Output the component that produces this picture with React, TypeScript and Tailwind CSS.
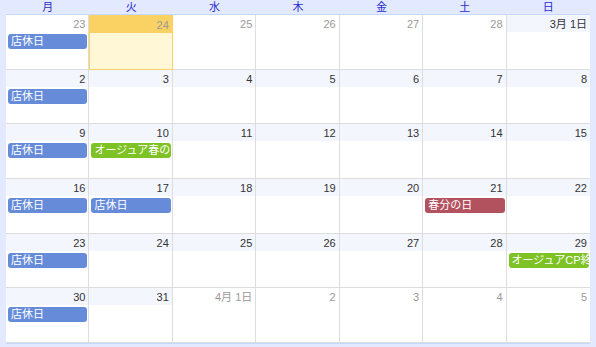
import React from 'react';

type Ev = { title: string; color: string };
type Day = { label: string; current: boolean; today?: boolean; events?: Ev[] };

const BLUE = 'bg-[#668cd9]';
const GREEN = 'bg-[#7ec225]';
const RED = 'bg-[#b3525f]';

const closed: Ev = { title: '店休日', color: BLUE };

const weeks: Day[][] = [
  [
    { label: '23', current: false, events: [closed] },
    { label: '24', current: false, today: true },
    { label: '25', current: false },
    { label: '26', current: false },
    { label: '27', current: false },
    { label: '28', current: false },
    { label: '3月 1日', current: true },
  ],
  [
    { label: '2', current: true, events: [closed] },
    { label: '3', current: true },
    { label: '4', current: true },
    { label: '5', current: true },
    { label: '6', current: true },
    { label: '7', current: true },
    { label: '8', current: true },
  ],
  [
    { label: '9', current: true, events: [closed] },
    { label: '10', current: true, events: [{ title: 'オージュア春のキャンペーン', color: GREEN }] },
    { label: '11', current: true },
    { label: '12', current: true },
    { label: '13', current: true },
    { label: '14', current: true },
    { label: '15', current: true },
  ],
  [
    { label: '16', current: true, events: [closed] },
    { label: '17', current: true, events: [closed] },
    { label: '18', current: true },
    { label: '19', current: true },
    { label: '20', current: true },
    { label: '21', current: true, events: [{ title: '春分の日', color: RED }] },
    { label: '22', current: true },
  ],
  [
    { label: '23', current: true, events: [closed] },
    { label: '24', current: true },
    { label: '25', current: true },
    { label: '26', current: true },
    { label: '27', current: true },
    { label: '28', current: true },
    { label: '29', current: true, events: [{ title: 'オージュアCP終了', color: GREEN }] },
  ],
  [
    { label: '30', current: true, events: [closed] },
    { label: '31', current: true },
    { label: '4月 1日', current: false },
    { label: '2', current: false },
    { label: '3', current: false },
    { label: '4', current: false },
    { label: '5', current: false },
  ],
];

const dayNames = ['月', '火', '水', '木', '金', '土', '日'];

const Cell: React.FC<{ day: Day; last: boolean }> = ({ day, last }) => {
  // strip colour: today yellow, this month pale blue, other months white
  const strip = day.today ? 'bg-[#fad163]' : day.current ? 'bg-[#f4f6fe]' : 'bg-white';
  const body = day.today ? 'bg-[#fff7d6]' : 'bg-white';
  return (
    <div
      className={`flex flex-col min-w-0 overflow-hidden ${body} ${
        day.today ? 'border border-[#fad163]' : `border-b border-[#dddddd] ${last ? '' : 'border-r'}`
      }`}
    >
      <div
        className={`h-[17px] shrink-0 pr-[3px] pt-[2px] text-right text-[11px] leading-[14px] ${strip} ${
          day.current ? 'text-[#333333]' : 'text-[#999999]'
        }`}
      >
        {day.label}
      </div>
      <div className="flex flex-col gap-[1px] pt-[2px] pl-[2px] pr-[1px]">
        {day.events?.map((ev, i) => (
          <div
            key={i}
            className={`${ev.color} h-[15px] rounded-[3px] pl-[3px] text-[11px] leading-[15px] text-white whitespace-nowrap overflow-hidden`}
          >
            {ev.title}
          </div>
        ))}
      </div>
    </div>
  );
};

export default function App() {
  return (
    <div
      className="w-[596px] h-[347px] bg-[#e3e9ff] px-[6px] flex flex-col overflow-hidden"
      style={{ fontFamily: '"Liberation Sans", "Noto Sans CJK JP", sans-serif' }}
    >
      <div className="grid grid-cols-7 h-[14px] shrink-0">
        {dayNames.map((n) => (
          <div key={n} className="text-center text-[11px] leading-[14px] text-[#2b2bd0]">
            {n}
          </div>
        ))}
      </div>
      <div className="flex flex-col border-t border-b border-[#c3d9ff] h-[330px] bg-white">
        {weeks.map((w, wi) => (
          <div key={wi} className="grid grid-cols-7 flex-1">
            {w.map((d, di) => (
              <Cell key={di} day={d} last={di === 6} />
            ))}
          </div>
        ))}
      </div>
    </div>
  );
}
